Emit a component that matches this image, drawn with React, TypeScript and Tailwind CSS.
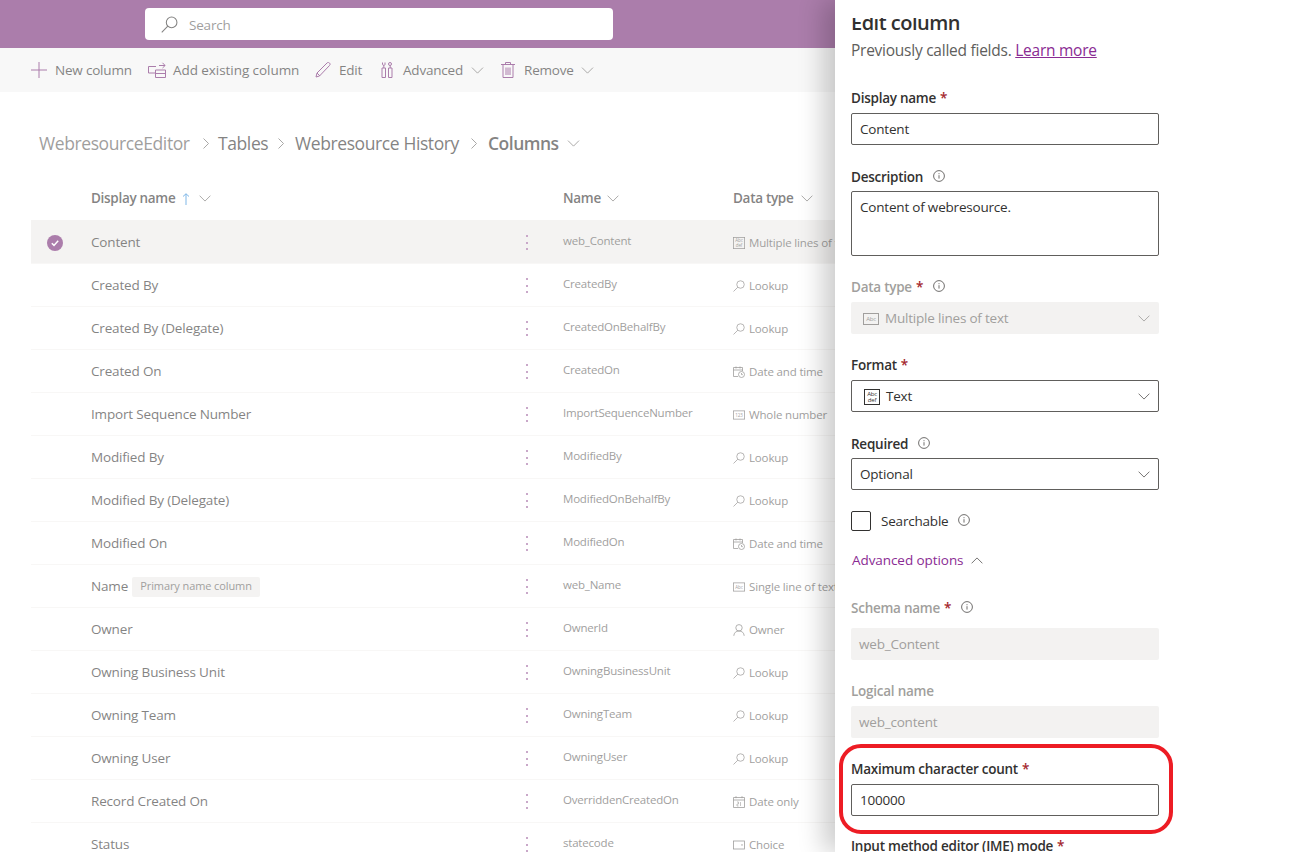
import type { ReactNode } from "react";

const font = "font-['Open_Sans',sans-serif]";

type IconProps = { className?: string };

function Chevron({ className = "" }: IconProps) {
  return (
    <svg viewBox="0 0 14 8" className={className} fill="none" stroke="currentColor" strokeWidth="1">
      <path d="M.7.7 7 7l6.3-6.3" />
    </svg>
  );
}

function SearchIcon({ className = "" }: IconProps) {
  return (
    <svg viewBox="0 0 16 16" className={className} fill="none" stroke="currentColor" strokeWidth="1">
      <circle cx="10" cy="6" r="5" />
      <path d="M6.4 9.6.7 15.3" />
    </svg>
  );
}

function InfoIcon() {
  return (
    <svg viewBox="0 0 12 12" className="h-3 w-3 text-[#605e5c]" fill="none" stroke="currentColor" strokeWidth="0.9">
      <circle cx="6" cy="6" r="5.4" />
      <path d="M6 5.2v3.4M6 3.2v1" />
    </svg>
  );
}

function BoxText({ lines, className = "" }: { lines: string[]; className?: string }) {
  return (
    <svg viewBox="0 0 16 16" className={className} fill="none" stroke="currentColor" strokeWidth="1">
      <rect x=".5" y={lines.length > 1 ? ".5" : "2.5"} width="15" height={lines.length > 1 ? "15" : "11"} />
      {lines.map((line, i) => (
        <text
          key={line}
          x="8"
          y={lines.length > 1 ? 7 + i * 6 : 10}
          textAnchor="middle"
          fontSize="6"
          stroke="none"
          fill="currentColor"
          fontFamily="Open Sans, sans-serif"
        >
          {line}
        </text>
      ))}
    </svg>
  );
}

function TypeIcon({ kind }: { kind: string }) {
  const cls = "h-3 w-3 shrink-0";
  if (kind === "lookup") return <SearchIcon className={cls} />;
  if (kind === "multi") return <BoxText lines={["Abc", "def"]} className={cls} />;
  if (kind === "single") return <BoxText lines={["Abc"]} className={cls} />;
  if (kind === "whole") return <BoxText lines={["123"]} className={cls} />;
  if (kind === "owner")
    return (
      <svg viewBox="0 0 12 12" className={cls} fill="none" stroke="currentColor" strokeWidth="0.8">
        <circle cx="6" cy="3.8" r="3.2" />
        <path d="M.8 11.8C1 8.8 3 7 6 7s5 1.8 5.2 4.8" />
      </svg>
    );
  if (kind === "datetime")
    return (
      <svg viewBox="0 0 12 12" className={cls} fill="none" stroke="currentColor" strokeWidth="0.8">
        <path d="M5 10.5H.5v-9h9V5M.5 4h9M3 .5v2M7 .5v2" />
        <circle cx="8.5" cy="8.5" r="3" />
        <path d="M8.5 7v1.6h1.3" />
      </svg>
    );
  if (kind === "date")
    return (
      <svg viewBox="0 0 12 12" className={cls} fill="none" stroke="currentColor" strokeWidth="0.8">
        <path d="M.5 1.5h11v10H.5zM.5 4h11M3 .2v2M9 .2v2" />
        <path d="M4 6h1.5v2H4v2h1.5M7.5 6v4" strokeWidth="0.6" />
      </svg>
    );
  return (
    <svg viewBox="0 0 12 12" className={cls} fill="none" stroke="currentColor" strokeWidth="0.8">
      <rect x=".5" y="2" width="11" height="8" />
      <path d="M8 5.5h2L9 7z" fill="currentColor" stroke="none" />
    </svg>
  );
}

function Kebab() {
  return (
    <div className="flex h-[15px] w-[2px] shrink-0 flex-col justify-between">
      <span className="h-[2px] w-[2px] bg-[#a56fa5]" />
      <span className="h-[2px] w-[2px] bg-[#a56fa5]" />
      <span className="h-[2px] w-[2px] bg-[#a56fa5]" />
    </div>
  );
}

const rows = [
  ["Content", "web_Content", "multi", "Multiple lines of text"],
  ["Created By", "CreatedBy", "lookup", "Lookup"],
  ["Created By (Delegate)", "CreatedOnBehalfBy", "lookup", "Lookup"],
  ["Created On", "CreatedOn", "datetime", "Date and time"],
  ["Import Sequence Number", "ImportSequenceNumber", "whole", "Whole number"],
  ["Modified By", "ModifiedBy", "lookup", "Lookup"],
  ["Modified By (Delegate)", "ModifiedOnBehalfBy", "lookup", "Lookup"],
  ["Modified On", "ModifiedOn", "datetime", "Date and time"],
  ["Name", "web_Name", "single", "Single line of text"],
  ["Owner", "OwnerId", "owner", "Owner"],
  ["Owning Business Unit", "OwningBusinessUnit", "lookup", "Lookup"],
  ["Owning Team", "OwningTeam", "lookup", "Lookup"],
  ["Owning User", "OwningUser", "lookup", "Lookup"],
  ["Record Created On", "OverriddenCreatedOn", "date", "Date only"],
  ["Status", "statecode", "choice", "Choice"],
];

function Toolbar() {
  return (
    <div className="flex h-[44px] items-center bg-[#f3f3f3] pl-[31px] text-[13.5px] tracking-[-0.2px] text-[#323130]">
      <svg viewBox="0 0 16 16" className="h-[16px] w-[16px] text-[#742774]" fill="none" stroke="currentColor" strokeWidth="1">
        <path d="M8 0v16M0 8h16" />
      </svg>
      <span className="ml-[8px] w-[77px] whitespace-nowrap">New column</span>
      <svg viewBox="0 0 18 16" className="ml-[16px] h-[16px] w-[18px] text-[#742774]" fill="none" stroke="currentColor" strokeWidth="1">
        <path d="M7 11H.5V4.500H8M7.500 8h10v7.500h-10zM7.500 11.500h10M11 3.500h6M14.500.8l2.600 2.700L14.500 6" />
      </svg>
      <span className="ml-[7px] w-[127px] whitespace-nowrap tracking-[-0.06px]">Add existing column</span>
      <svg viewBox="0 0 16 16" className="ml-[15px] h-[16px] w-[16px] text-[#742774]" fill="none" stroke="currentColor" strokeWidth="1">
        <path d="M1 15l1-4L12 1c1-1 2-.6 2.500 0s1 1.500 0 2.500L4.500 14zM2 11l3 3" />
      </svg>
      <span className="ml-[8px] w-[25px]">Edit</span>
      <svg viewBox="0 0 12 16" className="ml-[17px] h-[16px] w-[12px] text-[#742774]" fill="none" stroke="currentColor" strokeWidth="1">
        <path d="M1 6h3.500v9.500H1zM7.500 6H11v9.500H7.500zM1.500.5v2c0 1 2.500 1 2.500 0v-2M9 .500a1.500 1.500 0 1 1 0 3 1.500 1.500 0 0 1 0-3zM2.800 3v3M9.200 3.500V6" />
      </svg>
      <span className="ml-[10px] w-[60px]">Advanced</span>
      <Chevron className="ml-[8px] h-[7px] w-[13px] text-[#605e5c]" />
      <svg viewBox="0 0 14 16" className="ml-[17px] h-[16px] w-[14px] text-[#742774]" fill="none" stroke="currentColor" strokeWidth="1">
        <path d="M0 2.500h14M4.500 2.500V.5h5v2M2 2.500v13h10v-13M5 5.500v7.500M7 5.500v7.500M9 5.500v7.500" />
      </svg>
      <span className="ml-[9px] w-[50px]">Remove</span>
      <Chevron className="ml-[7px] h-[7px] w-[13px] text-[#605e5c]" />
    </div>
  );
}

function Sep() {
  return (
    <svg viewBox="0 0 6 11" className="h-[11px] w-[6px] shrink-0 text-[#605e5c]" fill="none" stroke="currentColor" strokeWidth="0.9">
      <path d="M.5.5l5 5-5 5" />
    </svg>
  );
}

function Breadcrumb() {
  return (
    <div className="mt-[37px] flex h-[28px] items-center pl-[39px] text-[17.5px] tracking-[-0.4px] text-[#323130]">
      <span className="w-[151px] whitespace-nowrap text-[#605e5c]">WebresourceEditor</span>
      <span className="ml-[13px] mr-[9px]"><Sep /></span>
      <span className="w-[49px]">Tables</span>
      <span className="ml-[11px] mr-[11px]"><Sep /></span>
      <span className="w-[165px] whitespace-nowrap">Webresource History</span>
      <span className="ml-[11px] mr-[11px]"><Sep /></span>
      <span className="w-[71px] font-semibold tracking-[-0.5px]">Columns</span>
      <Chevron className="ml-[8px] h-[7px] w-[13px] text-[#605e5c]" />
    </div>
  );
}

function Header() {
  return (
    <div className="mt-[29px] flex h-[25px] items-center text-[13.5px] font-semibold tracking-[-0.3px] text-[#323130]">
      <div className="flex w-[532px] shrink-0 items-center pl-[91px]">
        <span className="w-[85px] whitespace-nowrap">Display name</span>
        <svg viewBox="0 0 8 12" className="ml-[6px] h-[12px] w-[8px] text-[#2b88d8]" fill="none" stroke="currentColor" strokeWidth="1">
          <path d="M4 12V.8M1 3.500 4 .8l3 2.700" />
        </svg>
        <Chevron className="ml-[9px] h-[7px] w-[12px] text-[#605e5c]" />
      </div>
      <div className="flex w-[201px] shrink-0 items-center pl-[31px]">
        <span className="w-[38px]">Name</span>
        <Chevron className="ml-[6px] h-[7px] w-[12px] text-[#605e5c]" />
      </div>
      <div className="flex items-center">
        <span className="w-[62px] whitespace-nowrap">Data type</span>
        <Chevron className="ml-[6px] h-[7px] w-[12px] text-[#605e5c]" />
      </div>
    </div>
  );
}

function Row({ row, selected }: { row: string[]; selected: boolean }) {
  return (
    <div className={`ml-[31px] flex h-[43px] shrink-0 items-center border-t pt-[1px] ${selected ? "border-[#edebe9] bg-[#edebe9]" : "border-[#f3f2f1]"}`}>
      <div className="flex w-[60px] shrink-0 justify-start pl-[16px]">
        {selected && (
          <svg viewBox="0 0 16 16" className="h-[16px] w-[16px]">
            <circle cx="8" cy="8" r="8" fill="#742774" />
            <path d="M4.800 8.300 7 10.400l4.200-4.600" fill="none" stroke="#fff" strokeWidth="1.500" />
          </svg>
        )}
      </div>
      <div className="flex w-[435px] shrink-0 items-center text-[13.5px] tracking-[-0.17px] text-[#323130]">
        <span className="whitespace-nowrap">{row[0]}</span>
        {row[0] === "Name" && (
          <span className="ml-[4px] flex h-[20px] w-[128px] items-center justify-center whitespace-nowrap rounded-[2px] bg-[#edebe9] text-[11px] tracking-[-0.1px] text-[#605e5c]">
            Primary name column
          </span>
        )}
      </div>
      <Kebab />
      <div className="ml-[35px] w-[170px] shrink-0 whitespace-nowrap pb-[3px] text-[11.5px] tracking-[-0.2px] text-[#605e5c]">{row[1]}</div>
      <div className="flex items-center gap-[4px] whitespace-nowrap pt-[1px] text-[11.5px] tracking-[-0.15px] text-[#605e5c]">
        <TypeIcon kind={row[2]} />
        <span>{row[3]}</span>
      </div>
    </div>
  );
}

function MainArea() {
  return (
    <div className="relative h-[852px] w-[835px] shrink-0 overflow-hidden bg-white">
      <div className="flex h-[48px] items-center bg-[#742774] pl-[145px]">
        <div className="flex h-[32px] w-[468px] items-center rounded-[4px] bg-white pl-[16px] text-[13.5px] tracking-[-0.2px] text-[#605e5c]">
          <SearchIcon className="h-[17px] w-[17px] text-[#323130]" />
          <span className="ml-[11px] pt-[2px]">Search</span>
        </div>
      </div>
      <Toolbar />
      <Breadcrumb />
      <Header />
      <div className="mt-[9px] flex flex-col">
        {rows.map((row, i) => (
          <Row key={row[0]} row={row} selected={i === 0} />
        ))}
      </div>
      {/* panel's dim layer */}
      <div className="absolute inset-0 bg-white/40" />
    </div>
  );
}

function Label({ text, required, info, disabled }: { text: string; required?: boolean; info?: boolean; disabled?: boolean }) {
  return (
    <div className={`flex h-[20px] items-center whitespace-nowrap text-[13.5px] font-semibold tracking-[-0.25px] ${disabled ? "text-[#a19f9d]" : "text-[#323130]"}`}>
      <span>{text}</span>
      {required && <span className="ml-[4px] text-[#a4262c]">*</span>}
      {info && (
        <span className="ml-[10px] flex pb-[3px]">
          <InfoIcon />
        </span>
      )}
    </div>
  );
}

function Box({ children, tall, disabled }: { children: ReactNode; tall?: boolean; disabled?: boolean }) {
  return (
    <div
      className={`flex w-[308px] shrink-0 rounded-[2px] px-[8px] text-[13.5px] tracking-[-0.2px] ${tall ? "h-[65px] items-start pt-[5px]" : "h-[32px] items-center pt-[1px]"} ${
        disabled ? "bg-[#f3f2f1] text-[#a19f9d]" : "border border-[#605e5c] text-[#323130]"
      }`}
    >
      {children}
    </div>
  );
}

function Panel() {
  return (
    <div className="relative z-10 flex h-[852px] flex-1 flex-col bg-white pl-[16px] pt-[18px] shadow-[-12px_0_24px_rgba(0,0,0,0.2)]">
      <div className="h-[13px] shrink-0 overflow-hidden">
        <div className="-mt-[8px] text-[20px] font-semibold leading-[26px] tracking-[-0.5px] text-[#323130]">Edit column</div>
      </div>
      <div className="mt-[9px] shrink-0 text-[15.5px] leading-[20px] tracking-[-0.25px] text-[#605e5c]">
        Previously called fields. <span className="text-[#8a2b93] underline">Learn more</span>
      </div>

      <div className="mt-[28px] mb-[5px]"><Label text="Display name" required /></div>
      <Box>Content</Box>

      <div className="mt-[22px] mb-[4px]"><Label text="Description" info /></div>
      <Box tall>Content of webresource.</Box>

      <div className="mt-[21px] mb-[5px]"><Label text="Data type" required info disabled /></div>
      <Box disabled>
        <BoxText lines={["Abc"]} className="ml-[4px] h-[16px] w-[16px] text-[#a19f9d]" />
        <span className="ml-[6px] flex-1 whitespace-nowrap">Multiple lines of text</span>
        <Chevron className="mr-[1px] h-[7px] w-[12px] text-[#a19f9d]" />
      </Box>

      <div className="mt-[21px] mb-[5px]"><Label text="Format" required /></div>
      <Box>
        <BoxText lines={["Abc", "def"]} className="ml-[4px] h-[16px] w-[16px]" />
        <span className="ml-[6px] flex-1">Text</span>
        <Chevron className="h-[7px] w-[12px] text-[#605e5c]" />
      </Box>

      <div className="mt-[22px] mb-[4px]"><Label text="Required" info /></div>
      <Box>
        <span className="flex-1">Optional</span>
        <Chevron className="h-[7px] w-[12px] text-[#605e5c]" />
      </Box>

      <div className="mt-[21px] flex h-[20px] shrink-0 items-center text-[13.5px] tracking-[-0.2px] text-[#323130]">
        <span className="h-[20px] w-[20px] rounded-[2px] border border-[#323130]" />
        <span className="ml-[10px]">Searchable</span>
        <span className="ml-[9px] flex pb-[3px]"><InfoIcon /></span>
      </div>

      <div className="mt-[19px] flex h-[20px] shrink-0 items-center pl-[1px] text-[13.5px] tracking-[-0.07px] text-[#8a2b93]">
        <span>Advanced options</span>
        <Chevron className="ml-[8px] h-[7px] w-[12px] rotate-180 text-[#605e5c]" />
      </div>

      <div className="mt-[28px] mb-[10px]"><Label text="Schema name" required info disabled /></div>
      <Box disabled>web_Content</Box>

      <div className="mt-[21px] mb-[5px]"><Label text="Logical name" disabled /></div>
      <Box disabled>web_content</Box>

      <div className="mt-[21px] mb-[5px]"><Label text="Maximum character count" required /></div>
      <Box>100000</Box>

      <div className="mt-[20px]"><Label text="Input method editor (IME) mode" required /></div>
    </div>
  );
}

export default function App() {
  return (
    <div className={`relative flex h-[852px] w-[1294px] overflow-hidden bg-white ${font}`}>
      <MainArea />
      <Panel />
      {/* red callout drawn on the screenshot */}
      <div className="pointer-events-none absolute left-[839px] top-[744px] z-20 h-[90px] w-[334px] rounded-[22px] border-[4px] border-[#ed1c24]" />
    </div>
  );
}
